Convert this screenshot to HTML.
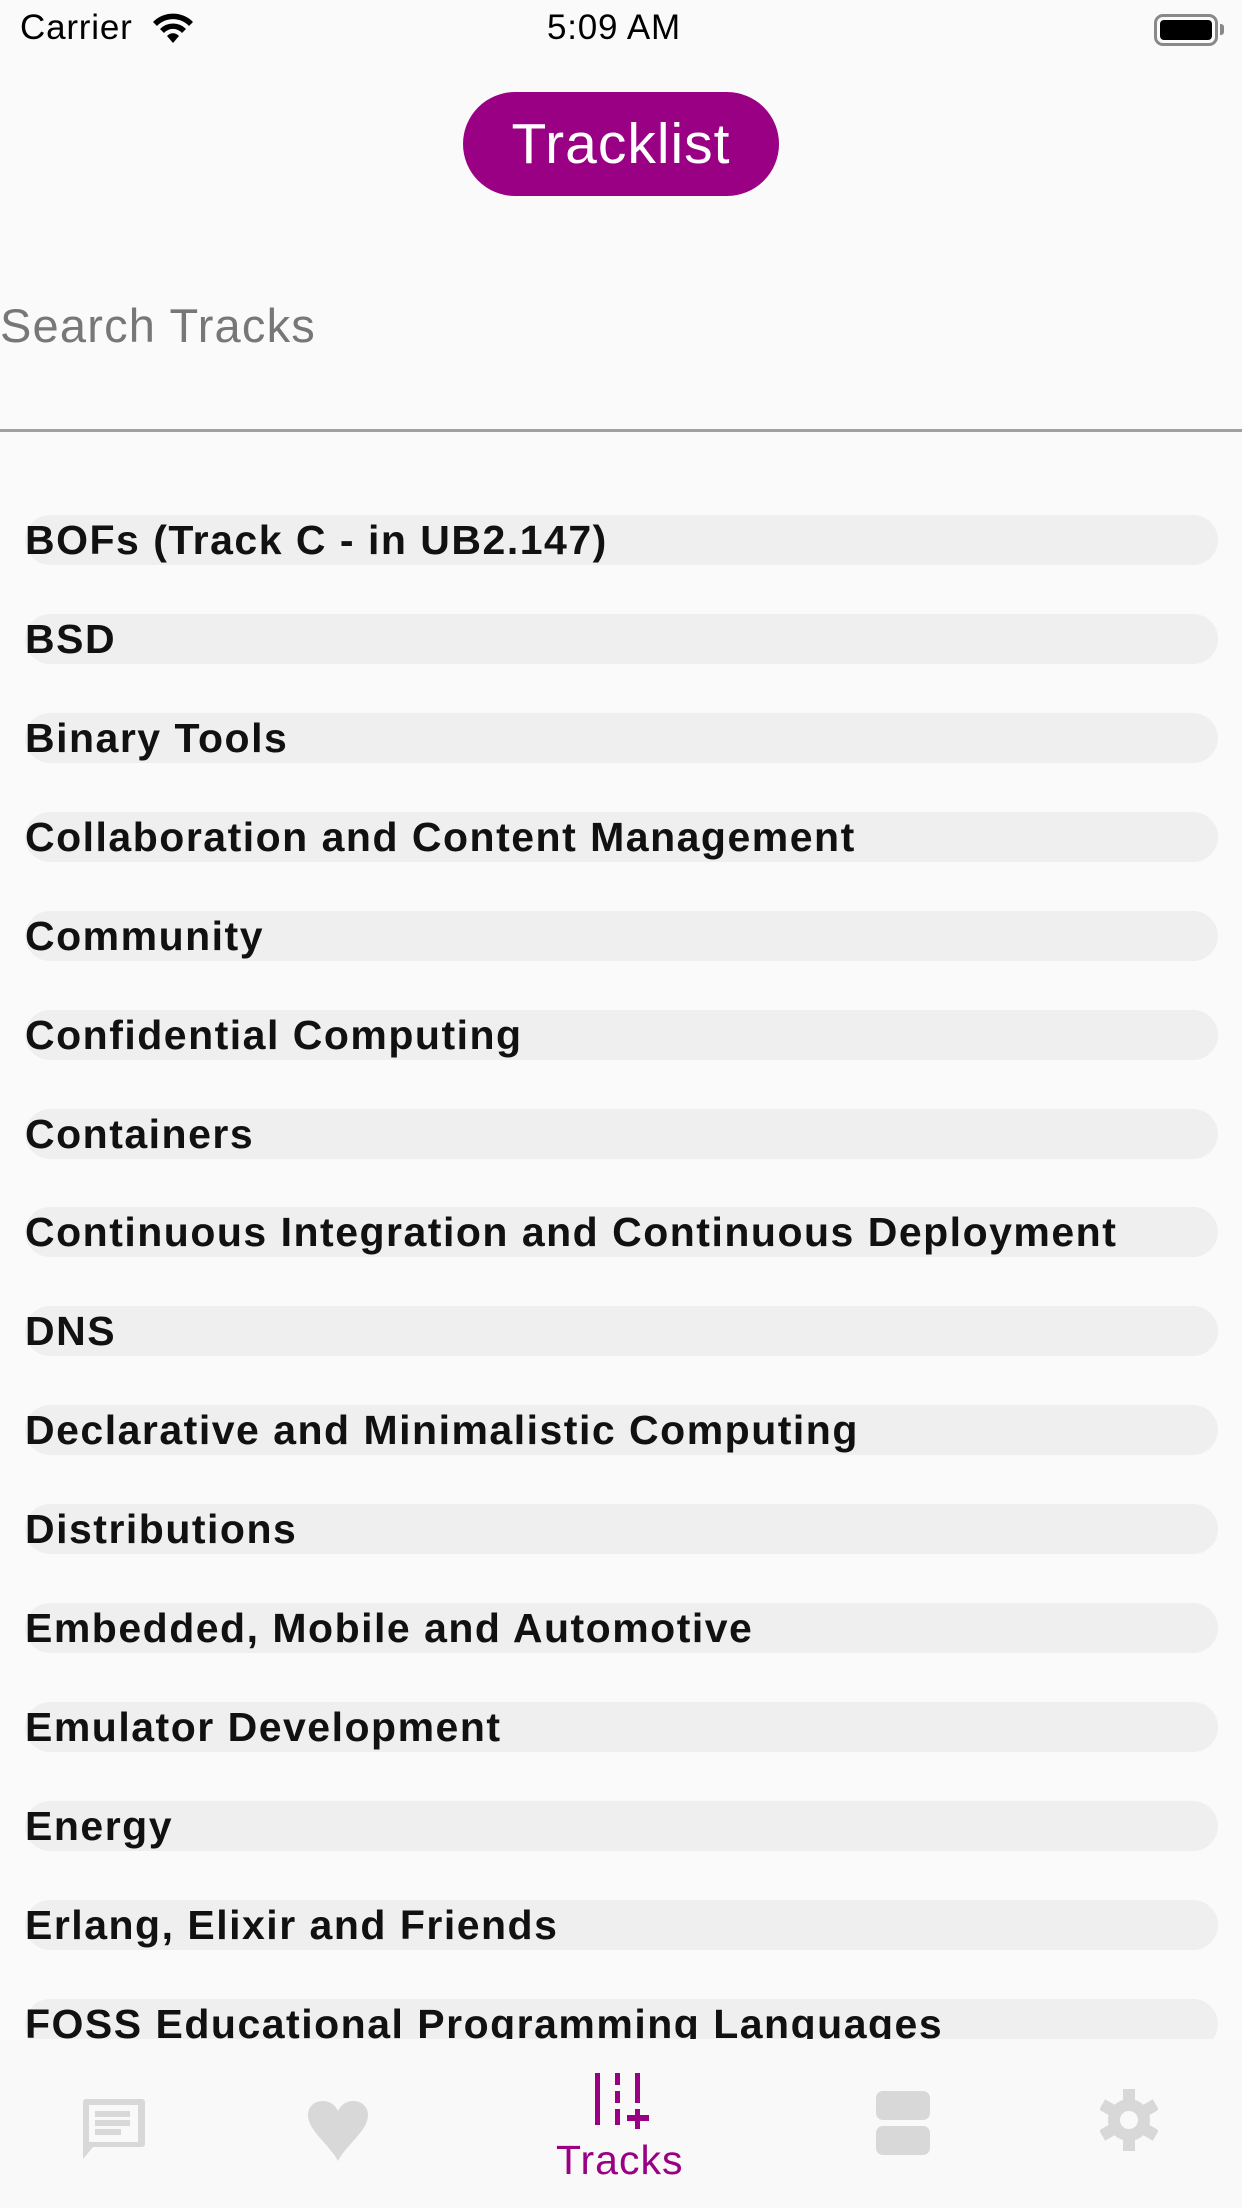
<!DOCTYPE html>
<html><head><meta charset="utf-8"><style>
*{margin:0;padding:0;box-sizing:border-box}
body{width:1242px;height:2208px;background:#fafafa;font-family:"Liberation Sans",sans-serif;position:relative;overflow:hidden}
.st{position:absolute;top:8px;font-size:35px;color:#000;letter-spacing:0.8px}
.btn{position:absolute;left:463px;top:92px;width:316px;height:104px;border-radius:52px;background:#9a0084;color:#fff;font-size:57px;text-align:center;line-height:104px;letter-spacing:1px}
.search{position:absolute;left:0;top:298px;font-size:47px;color:#777;letter-spacing:1.2px}
.line{position:absolute;left:0;top:429px;width:1242px;height:3px;background:#a0a0a0}
.row{position:absolute;left:25px;width:1193px;height:50px;border-radius:25px;background:#efefef;font-weight:bold;font-size:41px;line-height:50px;color:#111;white-space:nowrap;letter-spacing:1.5px}
.tab{position:absolute;left:0;top:2039px;width:1242px;height:169px;background:#f9f9f9}
.ic{position:absolute}
</style></head><body>
<div class="st" style="left:20px">Carrier</div>
<svg class="ic" style="left:150px;top:10px" width="46" height="36" viewBox="0 0 46 36"><path d="M3 12a28 28 0 0 1 40 0l-4 4a22 22 0 0 0-32 0zM10 19a18 18 0 0 1 26 0l-4 4a12 12 0 0 0-18 0zM17 26a8 8 0 0 1 12 0l-6 7z" fill="#000"/></svg>
<div class="st" style="left:547px">5:09 AM</div>
<div class="ic" style="left:1154px;top:14px;width:64px;height:32px;border:3px solid #888;border-radius:9px;padding:3px"><div style="width:100%;height:100%;background:#000;border-radius:4px"></div></div>
<div class="ic" style="left:1220px;top:24px;width:4px;height:11px;background:#888;border-radius:0 3px 3px 0"></div>
<div class="btn">Tracklist</div>
<div class="search">Search Tracks</div>
<div class="line"></div>
<div class="row" style="top:515px">BOFs (Track C - in UB2.147)</div>
<div class="row" style="top:614px">BSD</div>
<div class="row" style="top:713px">Binary Tools</div>
<div class="row" style="top:812px">Collaboration and Content Management</div>
<div class="row" style="top:911px">Community</div>
<div class="row" style="top:1010px">Confidential Computing</div>
<div class="row" style="top:1109px">Containers</div>
<div class="row" style="top:1207px">Continuous Integration and Continuous Deployment</div>
<div class="row" style="top:1306px">DNS</div>
<div class="row" style="top:1405px">Declarative and Minimalistic Computing</div>
<div class="row" style="top:1504px">Distributions</div>
<div class="row" style="top:1603px">Embedded, Mobile and Automotive</div>
<div class="row" style="top:1702px">Emulator Development</div>
<div class="row" style="top:1801px">Energy</div>
<div class="row" style="top:1900px">Erlang, Elixir and Friends</div>
<div class="row" style="top:1999px">FOSS Educational Programming Languages</div>
<div class="tab">
<svg class="ic" style="left:83px;top:60px" width="62" height="60" viewBox="0 0 62 60"><path d="M3 0h56a3 3 0 0 1 3 3v42a3 3 0 0 1-3 3H10L0 60V3a3 3 0 0 1 3-3z" fill="#d8d8d8"/><path d="M6 6h49v37H6z" fill="#f9f9f9"/><path d="M12 12h35v6H12zM12 21h35v6H12zM12 30h26v6H12z" fill="#d8d8d8"/></svg>
<svg class="ic" style="left:308px;top:62px" width="60" height="60" viewBox="0 0 60 60"><path d="M30 60C22 44 0 30 0 14 0 5 7 0 15 0c7 0 12 4 15 10 3-6 8-10 15-10 8 0 15 5 15 14 0 16-22 30-30 46z" fill="#d8d8d8"/></svg>
<svg class="ic" style="left:595px;top:34px" width="60" height="60" viewBox="0 0 60 60"><path d="M0 0h5v52H0zM20 0h5v12h-5zM20 18h5v12h-5zM20 36h5v16h-5zM40 0h5v30h-5zM40 36h5v20h-5zM32 42h22v6H32z" fill="#9a0084"/></svg>
<svg class="ic" style="left:876px;top:52px" width="54" height="64" viewBox="0 0 54 64"><rect x="0" y="0" width="54" height="29" rx="7" fill="#d8d8d8"/><rect x="0" y="35" width="54" height="29" rx="7" fill="#d8d8d8"/></svg>
<svg class="ic" style="left:1100px;top:50px" width="58" height="62" viewBox="-29 -31 58 62"><g fill="#d8d8d8"><circle r="21"/><rect x="-6" y="-31" width="12" height="62"/><rect x="-6" y="-31" width="12" height="62" transform="rotate(60)"/><rect x="-6" y="-31" width="12" height="62" transform="rotate(-60)"/></g><circle r="9" fill="#f9f9f9"/></svg>
<div class="ic" style="left:556px;top:98px;font-size:41px;color:#9a0084;letter-spacing:1px">Tracks</div>
</div>
</body></html>
